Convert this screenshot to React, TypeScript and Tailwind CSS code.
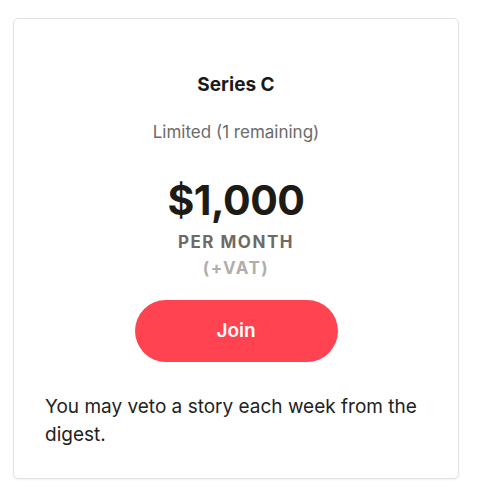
export default function App() {
  return (
    <div className="min-h-screen bg-white pt-[18px] pl-[13px]" style={{ fontFamily: "Inter, 'Noto Sans', sans-serif" }}>
      <div className="w-[446px] h-[461px] rounded-[5px] border border-[#e2e2e2] shadow-[0_1px_2px_rgba(0,0,0,0.06)] flex flex-col items-center pt-[54px]">
        <h3 className="text-[19px] font-bold text-[#1a1a1a] leading-[24px]">Series C</h3>
        <p className="mt-[24px] text-[17px] text-[#6b6b6b] leading-[22px]">Limited (1 remaining)</p>
        <div className="mt-[33px] text-[41px] font-bold text-[#1e1a14] leading-[48px] tracking-[-0.5px]">$1,000</div>
        <div className="mt-[7px] text-[17px] font-bold tracking-[1.5px] text-[#6e6a66] leading-[22px]">PER MONTH</div>
        <div className="mt-[4px] text-[17px] font-bold tracking-[1.5px] text-[#b2aeaa] leading-[22px]">(+VAT)</div>
        <button className="mt-[21px] w-[203px] h-[62px] rounded-full bg-[#ff4350] text-white text-[19px] font-semibold">
          Join
        </button>
        <p className="self-stretch mt-[31px] px-[31px] text-[19px] leading-[28px] text-[#222222]">
          You may veto a story each week from the digest.
        </p>
      </div>
    </div>
  );
}
